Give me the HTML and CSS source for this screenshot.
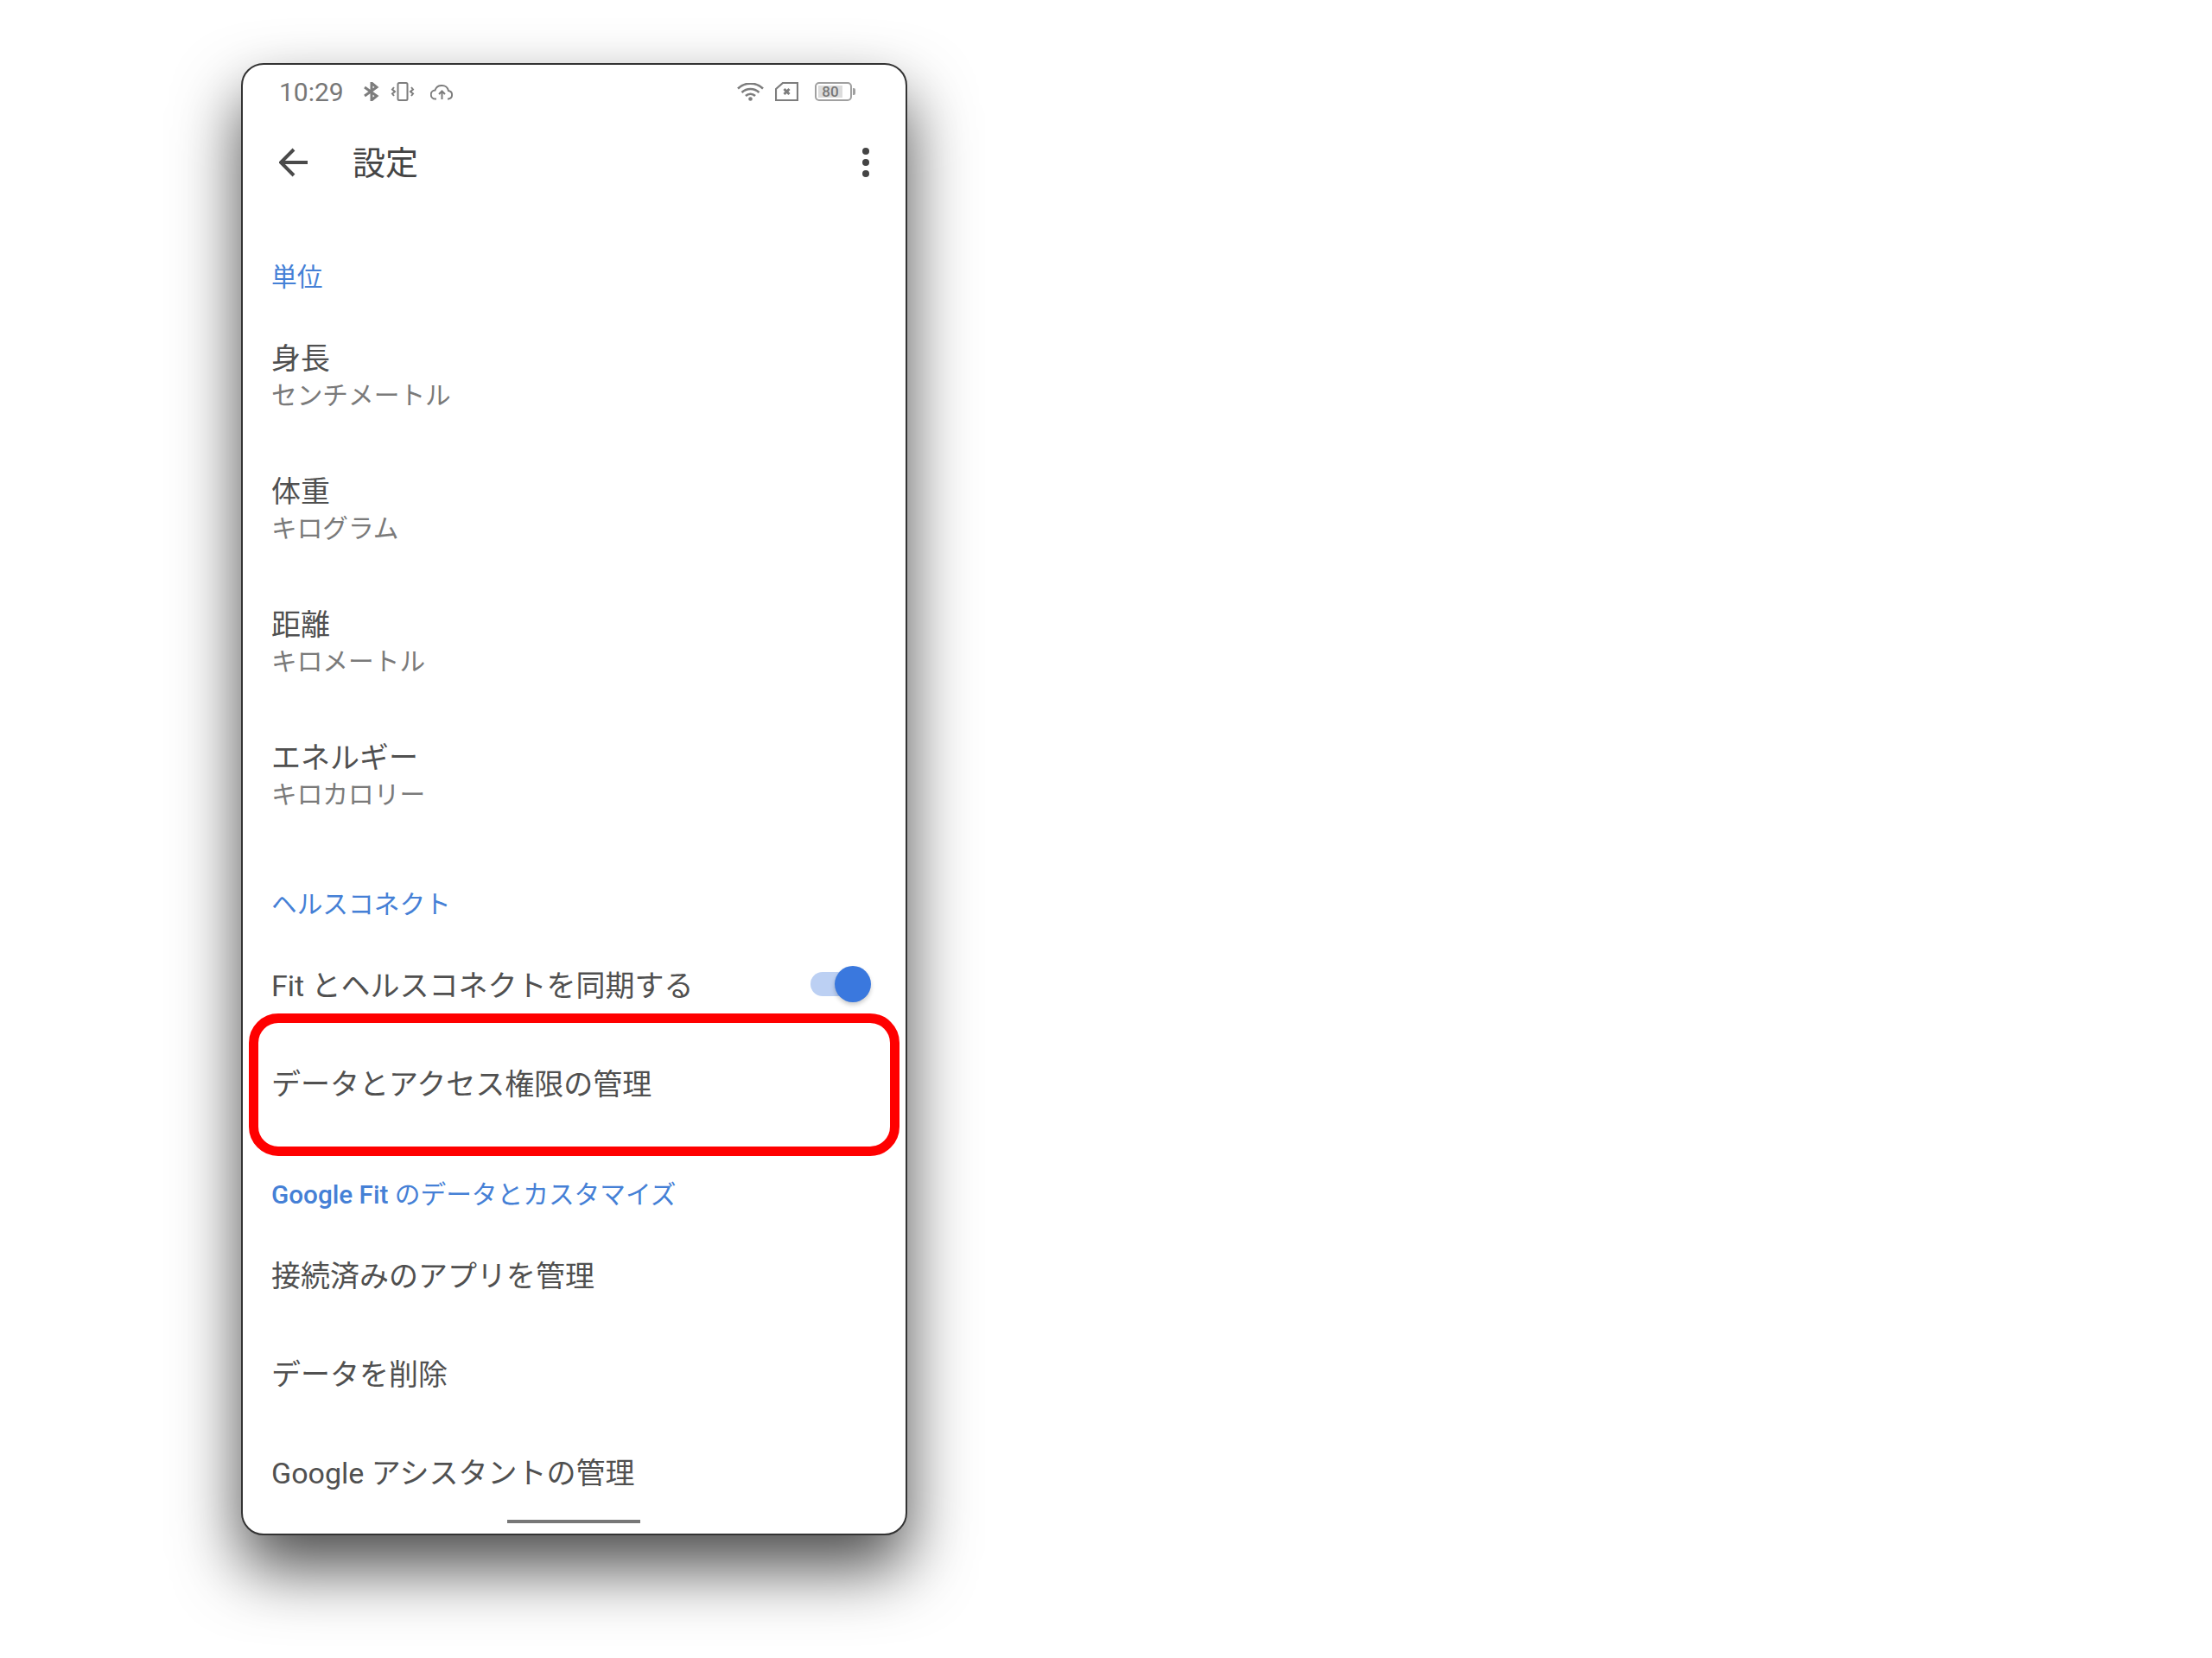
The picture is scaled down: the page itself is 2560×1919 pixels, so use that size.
FILE: index.html
```html
<!DOCTYPE html>
<html lang="ja">
<head>
<meta charset="utf-8">
<title>設定</title>
<link rel="stylesheet" href="styles.css">
</head>
<body>
<main class="phone">
  <div class="status">
    <span class="time">10:29</span>
    <svg class="ic bt" viewBox="0 0 20 22"><path d="M2 6l14 10-6 5V1l6 5L2 16" /></svg>
    <svg class="ic vib" viewBox="0 0 28 22"><rect x="8.500" y="1" width="11" height="20" rx="1.500"/><path d="M4 6L2 8.500l3 2.500-3 2.500L4 16M24 6l2 2.500-3 2.500 3 2.500L24 16"/></svg>
    <svg class="ic cloud" viewBox="0 0 27 19"><path d="M7 17.500H6a5 5 0 0 1-.5-10A8 8 0 0 1 13.500 2a7.500 7.500 0 0 1 7.500 6 4.800 4.800 0 0 1 0 9.500h-1"/><path d="M13.500 18V9M10 12l3.500-3.500L17 12"/></svg>
    <span class="spacer"></span>
    <svg class="ic wifi" viewBox="0 0 31 21"><path d="M1 6.500a21 21 0 0 1 29 0M5.500 11a14.500 14.500 0 0 1 20 0M10 15a8 8 0 0 1 11 0"/><circle class="solid" cx="15.500" cy="18.500" r="2.300"/></svg>
    <svg class="ic sim" viewBox="0 0 27 22"><path d="M9 1h17v20H1V8z"/><path class="cross" d="M10.500 8l6 6M16.500 8l-6 6"/></svg>
    <div class="battery"><span class="charge">80</span></div>
  </div>

  <header class="appbar">
    <svg class="back" viewBox="0 0 34 34"><path d="M33 17H3M17 2L2 17l15 15"/></svg>
    <h1 class="title">設定</h1>
    <span class="spacer"></span>
    <div class="dots"><i></i><i></i><i></i></div>
  </header>

  <div class="list">
    <h2 class="section">単位</h2>
    <div class="row two"><span class="main">身長</span><span class="sub">センチメートル</span></div>
    <div class="row two"><span class="main">体重</span><span class="sub">キログラム</span></div>
    <div class="row two"><span class="main">距離</span><span class="sub">キロメートル</span></div>
    <div class="row two"><span class="main">エネルギー</span><span class="sub">キロカロリー</span></div>

    <h2 class="section">ヘルスコネクト</h2>
    <div class="row one between">
      <span class="main">Fit とヘルスコネクトを同期する</span>
      <span class="toggle"><span class="knob"></span></span>
    </div>
    <div class="row one"><span class="main">データとアクセス権限の管理</span></div>

    <h2 class="section"><b class="latin">Google Fit</b> のデータとカスタマイズ</h2>
    <div class="row one"><span class="main">接続済みのアプリを管理</span></div>
    <div class="row one"><span class="main">データを削除</span></div>
    <div class="row one"><span class="main">Google アシスタントの管理</span></div>
  </div>

  <div class="highlight"></div>
  <div class="gesture"></div>
</main>
</body>
</html>
```

FILE: styles.css
```css
* { box-sizing: border-box; }
html, body { margin: 0; padding: 0; background: #fff; }
body {
  width: 2560px;
  height: 1919px;
  overflow: hidden;
  padding: 73px 0 0 279px;
  font-family: Roboto, "Noto Sans CJK JP", sans-serif;
}
.phone {
  position: relative;
  width: 771px;
  height: 1704px;
  background: #fff;
  border: 2px solid #333;
  border-radius: 26px;
  box-shadow: 0 38px 76px rgba(0,0,0,.7);
  overflow: hidden;
}
.status {
  display: flex;
  align-items: center;
  height: 62px;
  padding: 0 62px 0 42px;
}
.time { font-size: 30px; color: #777; width: 97px; }
.spacer { flex: 1; }
.ic { fill: none; stroke: #7d7d7d; stroke-width: 2; display: block; }
.ic .solid { fill: #7d7d7d; stroke: none; }
.ic .cross { stroke-width: 3; }
.bt { width: 20px; height: 22px; stroke-width: 3; margin-right: 12px; }
.vib { width: 28px; height: 22px; margin-right: 18px; }
.cloud { width: 27px; height: 19px; }
.wifi { width: 31px; height: 21px; stroke-width: 2.6; margin-right: 13px; }
.sim { width: 27px; height: 22px; stroke-width: 2.2; margin-right: 19px; }
.battery {
  position: relative;
  width: 43px;
  height: 22px;
  border: 2px solid #a0a0a0;
  border-radius: 5px;
  padding: 2px;
}
.battery::after {
  content: "";
  position: absolute;
  right: -6px;
  top: 5px;
  width: 3px;
  height: 8px;
  background: #a0a0a0;
  border-radius: 0 2px 2px 0;
}
.charge {
  display: block;
  width: 80%;
  height: 100%;
  background: #dcdcdc;
  color: #777;
  font-size: 17px;
  line-height: 14px;
  text-align: center;
  font-weight: 500;
}
.appbar {
  display: flex;
  align-items: center;
  height: 102px;
  padding: 0 42px 0 42px;
}
.back { width: 34px; height: 34px; fill: none; stroke: #4a4a4a; stroke-width: 4; margin-right: 51px; }
.title { margin: 0 0 6px; font-size: 38px; font-weight: 400; color: #444; }
.dots { display: flex; flex-direction: column; gap: 5px; }
.dots i { display: block; width: 8px; height: 8px; border-radius: 50%; background: #444; }
.list { padding: 11px 0 0 33px; }
.section {
  height: 76px;
  margin: 32px 0 0;
  font-size: 29.700px;
  line-height: 82px;
  font-weight: 400;
  color: #4580d6;
}
.list .section:first-child { margin-top: 30px; height: 78px; }
.latin { font-weight: 500; }
.row { display: flex; flex-direction: column; justify-content: center; padding-right: 30px; }
.row.two { height: 154px; padding-top: 1px; }
.row.one { height: 114px; padding-top: 3px; }
.row.between { flex-direction: row; justify-content: space-between; align-items: center; }
.main { font-size: 34px; line-height: 44px; color: #505050; }
.sub { font-size: 29.700px; line-height: 40px; margin-top: 1px; color: #7a7a7a; }
.toggle {
  position: relative;
  display: block;
  width: 48px;
  height: 28px;
  margin: -3px 32px 0 0;
  border-radius: 14px;
  background: #bcd0f3;
}
.knob {
  position: absolute;
  right: -22px;
  top: -7px;
  width: 42px;
  height: 42px;
  border-radius: 50%;
  background: #3a78de;
  box-shadow: 0 3px 5px rgba(0,0,0,.2);
}
.highlight {
  position: absolute;
  left: 7px;
  top: 1098px;
  width: 753px;
  height: 165px;
  border: 11px solid #f00;
  border-radius: 34px;
}
.gesture {
  position: absolute;
  left: 306px;
  bottom: 12px;
  width: 154px;
  height: 4px;
  background: #777;
}
```
